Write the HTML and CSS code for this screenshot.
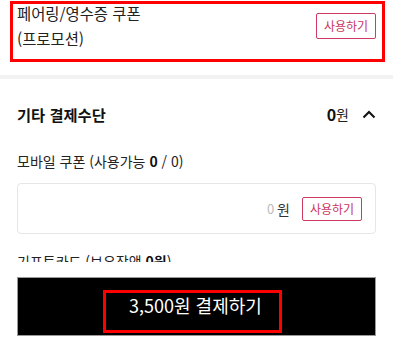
FILE: index.html
```html
<!DOCTYPE html>
<html lang="ko">
<head>
<meta charset="utf-8">
<link rel="stylesheet" href="styles.css">
</head>
<body>
<div class="coupon-row">
  <div class="coupon-text">페어링/영수증 쿠폰<br>(프로모션)</div>
  <button class="use-btn top-btn">사용하기</button>
</div>
<div class="separator"></div>
<section class="etc">
  <div class="etc-head">
    <h2 class="etc-title">기타 결제수단</h2>
    <div class="etc-sum"><b>0</b>원
      <svg class="chev" width="14" height="9" viewBox="0 0 14 9"><path d="M1.5 7.5 L7 2 L12.5 7.5" fill="none" stroke="#111" stroke-width="2"/></svg>
    </div>
  </div>
  <div class="label">모바일 쿠폰 (사용가능 <b>0</b> / 0)</div>
  <div class="input-box">
    <span class="zero">0</span><span class="won">원</span>
    <button class="use-btn">사용하기</button>
  </div>
  <div class="label gift">기프트카드 (보유잔액 <b>0원</b>)</div>
</section>
<div class="bottom-bar">
  <button class="pay-btn"><span class="pay-label">3,500원 결제하기</span></button>
</div>
</body>
</html>
```
FILE: styles.css
```css
* { box-sizing: border-box; }
html, body { margin: 0; padding: 0; background: #fff; }
body {
  width: 393px;
  height: 337px;
  overflow: hidden;
  font-family: "Noto Sans CJK KR", "Noto Sans", sans-serif;
  color: #222;
}
.coupon-row {
  margin: 1px 8px 0 10px;
  border: 3px solid #f00;
  display: flex;
  justify-content: space-between;
  align-items: flex-start;
  padding: 0 6px 8px 4px;
  height: 61px;
}
.coupon-text {
  margin-top: -3px;
  font-size: 15.4px;
  line-height: 25px;
  color: #222;
}
.use-btn {
  font-family: inherit;
  width: 60px;
  height: 24px;
  padding: 0;
  border: 1px solid #cf3a62;
  border-radius: 2px;
  background: #fff;
  color: #c8345b;
  font-size: 12px;
  line-height: 22px;
}
.top-btn { margin-top: 9px; height: 26px; }
.separator {
  margin-top: 13px;
  height: 4px;
  background: #f2f2f2;
}
.etc { padding: 0 17px; }
.etc-head {
  display: flex;
  justify-content: space-between;
  align-items: center;
  margin-top: 23px;
  height: 24px;
}
.etc-title {
  margin: 0;
  font-size: 15.3px;
  font-weight: 700;
  color: #111;
}
.etc-sum {
  display: flex;
  align-items: center;
  font-size: 14px;
  color: #222;
}
.etc-sum b { font-size: 16px; color: #111; }
.chev { margin-left: 13px; margin-right: 0; }
.label {
  margin-top: 25px;
  font-size: 14px;
  line-height: 20px;
  color: #222;
}
.label b { font-weight: 700; color: #111; }
.input-box {
  margin-top: 12px;
  height: 51px;
  border: 1px solid #e6e6e6;
  border-radius: 4px;
  display: flex;
  align-items: center;
  justify-content: flex-end;
  padding: 0 13px 0 0;
}
.zero { color: #bbb; font-size: 13px; }
.won { color: #333; font-size: 14px; margin-left: 3px; margin-right: 12px; }
.gift { margin-top: 17px; }
.bottom-bar {
  position: fixed;
  left: 0;
  right: 0;
  bottom: 0;
  height: 75px;
  background: #fff;
  padding: 15px 17px 1px 17px;
}
.pay-btn {
  width: 359px;
  height: 59px;
  background: #000;
  border: 1px solid #999;
  padding: 0 0 2px 0;
  display: flex;
  justify-content: center;
  align-items: flex-end;
  font-family: inherit;
}
.pay-label {
  margin-right: 8px;
  border: 3px solid #f00;
  width: 179px;
  height: 43px;
  padding: 0 0 0 23px;
  text-align: left;
  color: #fff;
  font-size: 18px;
  line-height: 24px;
}
```
